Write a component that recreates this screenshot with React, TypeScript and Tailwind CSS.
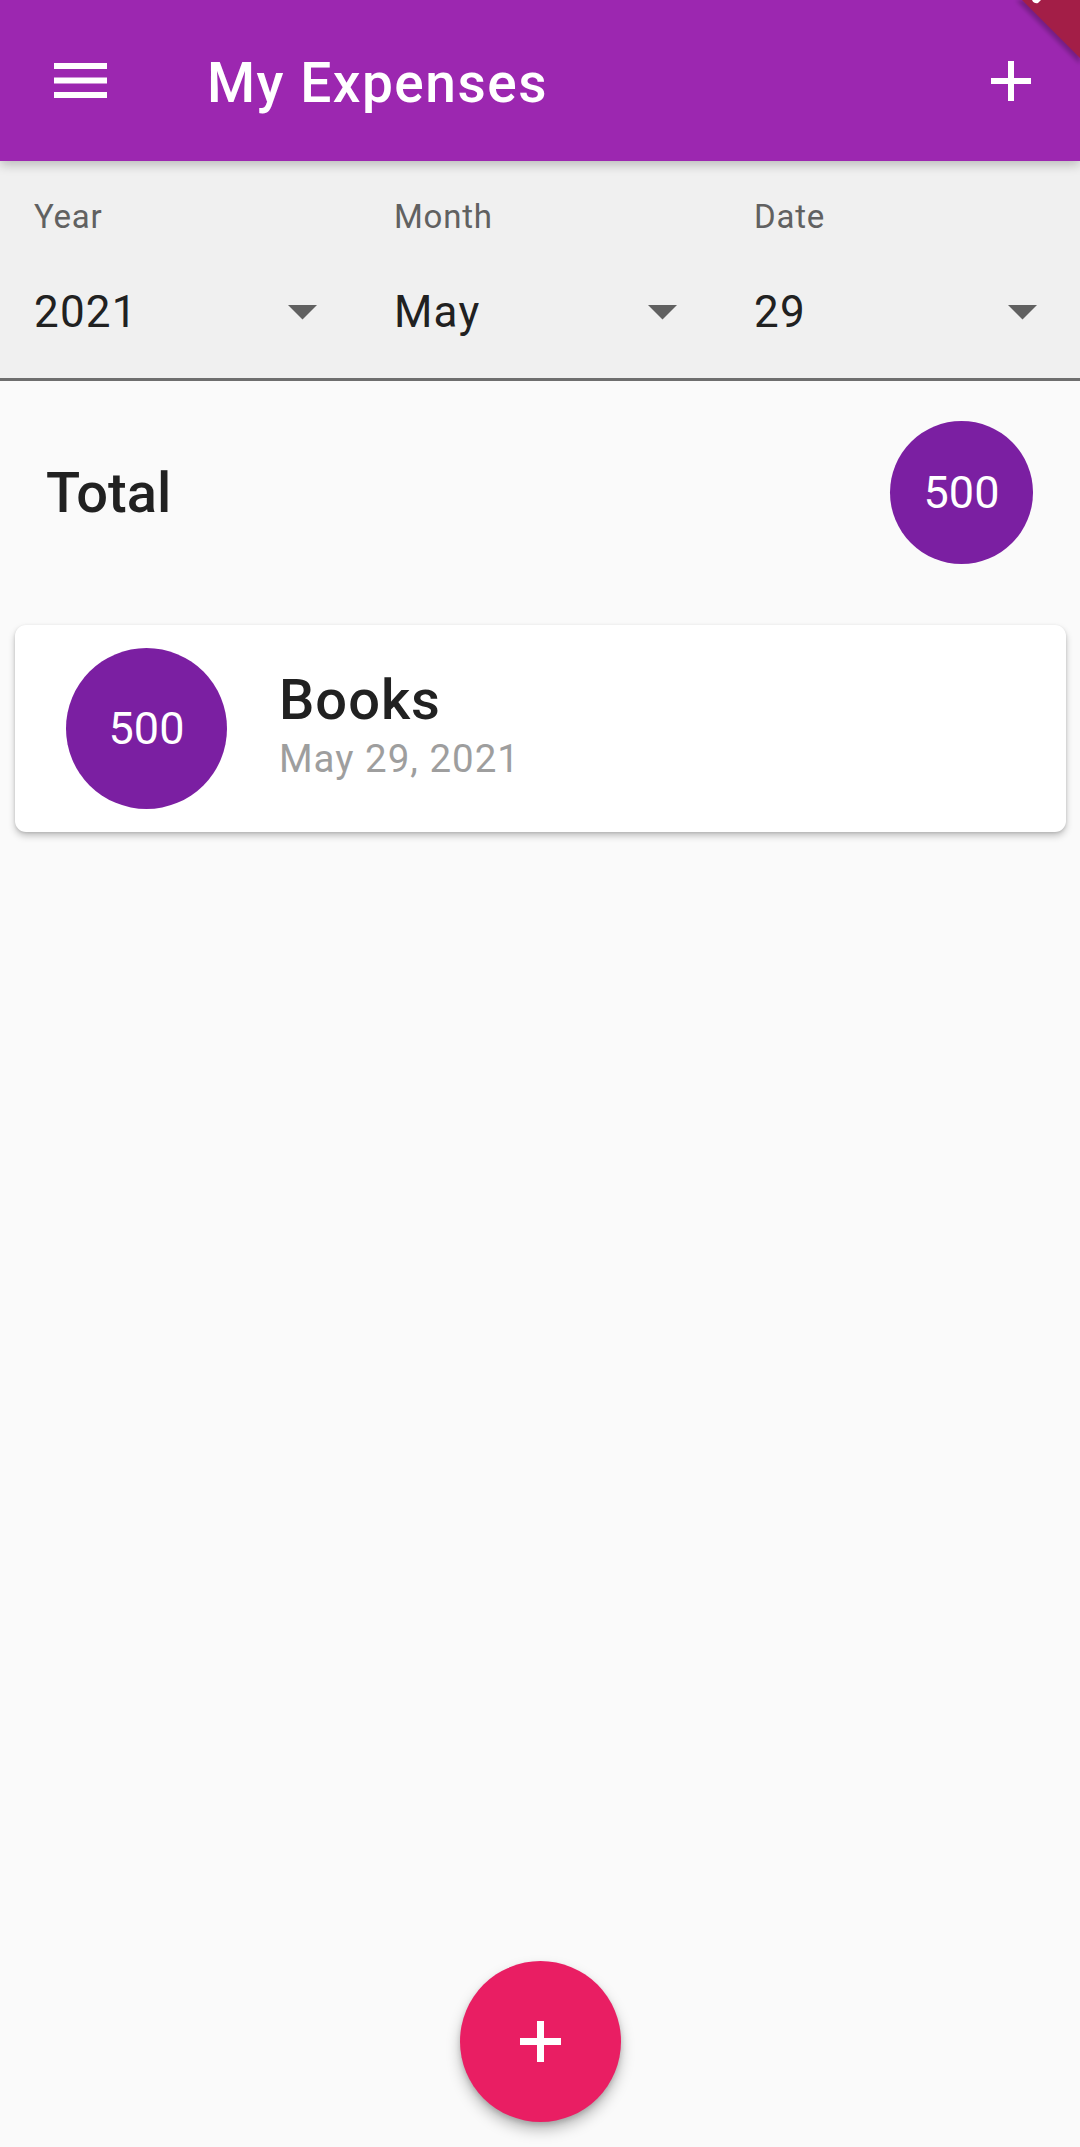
import React from "react";

function MenuIcon() {
  return (
    <svg width="53" height="35" viewBox="0 0 53 35" className="shrink-0">
      <rect x="0" y="0" width="53" height="6" fill="#fff" />
      <rect x="0" y="14.5" width="53" height="6" fill="#fff" />
      <rect x="0" y="29" width="53" height="6" fill="#fff" />
    </svg>
  );
}

function PlusIcon({ size, thick }: { size: number; thick: number }) {
  const c = (size - thick) / 2;
  return (
    <svg width={size} height={size} viewBox={`0 0 ${size} ${size}`} className="shrink-0">
      <rect x={c} y="0" width={thick} height={size} fill="#fff" />
      <rect x="0" y={c} width={size} height={thick} fill="#fff" />
    </svg>
  );
}

function Arrow() {
  return (
    <svg width="29" height="15" viewBox="0 0 29 15" className="shrink-0">
      <polygon points="0,0 29,0 14.5,14.5" fill="#616161" />
    </svg>
  );
}

function Field({ label, value }: { label: string; value: string }) {
  return (
    <div className="flex-1 flex flex-col pl-[34px] pr-[43px] pt-[39px] pb-[44px]">
      <div className="text-[33px] leading-none tracking-[0.8px] text-[#616161]">{label}</div>
      <div className="mt-[57px] flex items-center justify-between h-[44px]">
        <span className="text-[44px] leading-none tracking-[1.2px] text-[#212121]">{value}</span>
        <Arrow />
      </div>
    </div>
  );
}

export default function App() {
  return (
    <div
      className="relative w-[1080px] h-[2147px] bg-[#fafafa] flex flex-col overflow-hidden"
      style={{ fontFamily: "Roboto, 'Noto Sans', Arial, sans-serif" }}
    >
      {/* App bar */}
      <header className="relative z-10 h-[161px] shrink-0 bg-[#9c27b0] flex items-center pl-[54px] pr-[49px] shadow-[0_4px_10px_rgba(0,0,0,0.22)]">
        <MenuIcon />
        <h1 className="ml-[100px] pt-[6px] text-[55px] leading-none font-medium tracking-[1.5px] text-white">My Expenses</h1>
        <div className="flex-1" />
        <PlusIcon size={40} thick={6} />
      </header>

      {/* Debug banner corner */}
      <svg
        width="70"
        height="70"
        viewBox="0 0 70 70"
        className="absolute top-0 right-0 z-20"
      >
        <defs>
          <filter id="sh" x="-20%" y="-20%" width="140%" height="140%">
            <feGaussianBlur stdDeviation="2" />
          </filter>
        </defs>
        <polygon points="6,0 70,0 70,64" fill="rgba(0,0,0,0.25)" filter="url(#sh)" />
        <polygon points="12,0 70,0 70,58" fill="#a31e47" />
        <path d="M22 0 Q24 4 28 3 L31 0 Z" fill="#fff" />
      </svg>

      {/* Dropdown filters */}
      <div className="flex bg-[#f0f0f0] border-b-[3px] border-[#6e6e6e] shrink-0">
        <Field label="Year" value="2021" />
        <Field label="Month" value="May" />
        <Field label="Date" value="29" />
      </div>

      {/* Total */}
      <div className="mt-[40px] h-[143px] flex items-center justify-between pl-[46px] pr-[47px] shrink-0">
        <span className="text-[56px] leading-none font-medium text-[#212121]">Total</span>
        <div className="w-[143px] h-[143px] rounded-full bg-[#7b1fa2] flex items-center justify-center">
          <span className="text-[45px] leading-none text-white">500</span>
        </div>
      </div>

      {/* Expense card */}
      <div className="mt-[61px] mx-[15px] mr-[14px] h-[207px] bg-white rounded-[11px] flex items-start shrink-0 shadow-[0_4px_7px_rgba(0,0,0,0.22),0_1px_3px_rgba(0,0,0,0.12)]">
        <div className="ml-[51px] mt-[23px] w-[161px] h-[161px] rounded-full bg-[#7b1fa2] flex items-center justify-center shrink-0">
          <span className="text-[45px] leading-none text-white">500</span>
        </div>
        <div className="ml-[52px] mt-[47px] flex flex-col">
          <span className="text-[56px] leading-none font-medium tracking-[1px] text-[#212121]">Books</span>
          <span className="mt-[12px] text-[38.5px] leading-none tracking-[1px] text-[#9e9e9e]">May 29, 2021</span>
        </div>
      </div>

      <div className="flex-1" />

      {/* FAB */}
      <div className="flex justify-center mb-[25px] shrink-0">
        <button className="w-[161px] h-[161px] rounded-full bg-[#e91e63] flex items-center justify-center shadow-[0_8px_14px_rgba(0,0,0,0.25),0_3px_5px_rgba(0,0,0,0.15)]">
          <PlusIcon size={41} thick={7} />
        </button>
      </div>
    </div>
  );
}
